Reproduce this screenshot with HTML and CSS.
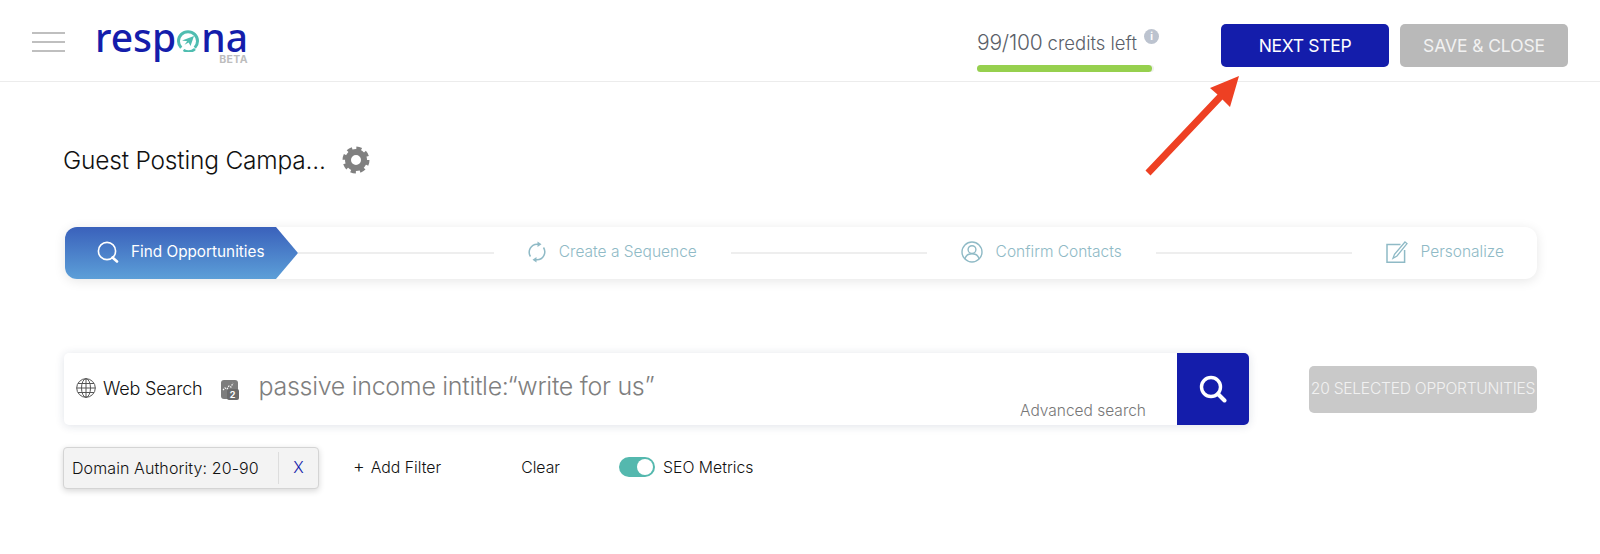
FILE: index.html
```html
<!DOCTYPE html>
<html lang="en">
<head>
<meta charset="utf-8">
<title>Respona</title>
<link rel="stylesheet" href="styles.css">
</head>
<body>
<header class="topbar">
  <div class="burger"><span></span><span></span><span></span></div>
  <div class="logo">
    <div class="logo-word"><span>resp</span><svg class="logo-o" viewBox="0 0 22 22"><path d="M4.200 17.800A9.500 9.500 0 1 1 17.800 17.800" fill="none" stroke="#4fbdb0" stroke-width="3"/><path d="M18 19A10 10 0 0 1 6.500 20" fill="none" stroke="#4fbdb0" stroke-width="2.600"/><path d="M5 10.500 L17 6 L13.500 16 L11.700 12.400 L7.500 14.800 L10.200 11.200Z" fill="#4fbdb0"/></svg><span>na</span></div>
    <div class="logo-beta">BETA</div>
  </div>
  <div class="credits">
    <div class="credits-text"><span class="credits-num">99/100</span> <span class="credits-label">credits left</span><span class="info">i</span></div>
    <div class="progress"><div class="progress-fill"></div></div>
  </div>
  <button class="btn btn-primary">NEXT STEP</button>
  <button class="btn btn-muted">SAVE &amp; CLOSE</button>
</header>

<svg class="callout" viewBox="0 0 120 120"><path d="M.5 98.600 L72.500 22.600 L65 16 L94 4 L85 35 L77.500 27.400 L5.500 103.400Z" fill="#ee4023"/></svg>

<main class="page">
  <div class="title-row">
    <h1 class="title">Guest Posting Campa...</h1>
    <svg class="gear" viewBox="0 0 28 28"><circle cx="14" cy="14" r="8" fill="none" stroke="#808080" stroke-width="6"/><circle cx="14" cy="14" r="11.500" fill="none" stroke="#808080" stroke-width="4" stroke-dasharray="5.030 4"/></svg>
  </div>

  <nav class="stepper">
    <div class="step-active">
      <svg class="step-icon" viewBox="0 0 22 22"><circle cx="10" cy="10" r="8.600" fill="none" stroke="#fff" stroke-width="1.600"/><path d="M15.500 16.500 L20 20.500" stroke="#fff" stroke-width="2.600" stroke-linecap="round"/></svg>
      <span>Find Opportunities</span>
    </div>
    <div class="step-line"></div>
    <div class="step">
      <svg class="step-icon step-icon-narrow" viewBox="0 0 18 22"><path d="M2.500 15.500A8 8 0 0 1 9 3.200H11" fill="none" stroke="#8fbac6" stroke-width="1.500"/><path d="M9.500 .5 L13.500 3.200 L9.500 6Z" fill="#8fbac6"/><path d="M15.500 6.500A8 8 0 0 1 9 18.800H7" fill="none" stroke="#8fbac6" stroke-width="1.500"/><path d="M8.500 16 L4.500 18.800 L8.500 21.500Z" fill="#8fbac6"/></svg>
      <span>Create a Sequence</span>
    </div>
    <div class="step-line"></div>
    <div class="step">
      <svg class="step-icon" viewBox="0 0 22 22"><circle cx="11" cy="11" r="10" fill="none" stroke="#8fbac6" stroke-width="1.400"/><circle cx="11" cy="8.600" r="3.900" fill="none" stroke="#8fbac6" stroke-width="1.400"/><path d="M4 18c.6-3.800 3.500-5.300 7-5.300s6.400 1.500 7 5.300" fill="none" stroke="#8fbac6" stroke-width="1.400"/></svg>
      <span>Confirm Contacts</span>
    </div>
    <div class="step-line"></div>
    <div class="step step-last">
      <svg class="step-icon" viewBox="0 0 22 22"><path d="M14.500 3.500H1v17.800h17.600V9" fill="none" stroke="#8fbac6" stroke-width="1.500"/><path d="M19 1 L21 2.600 L11 15 L7 17.300 L8.500 13.300Z" fill="none" stroke="#8fbac6" stroke-width="1.300"/></svg>
      <span>Personalize</span>
    </div>
  </nav>

  <div class="search-row">
    <div class="search-box">
      <div class="search-field">
        <svg class="globe" viewBox="0 0 20 20"><g fill="none" stroke="#555" stroke-width="1"><circle cx="10" cy="10" r="9.300"/><ellipse cx="10" cy="10" rx="4.500" ry="9.300"/><path d="M10 .7V19.300M.7 10H19.300M2 5.500H18M2 14.500H18"/></g></svg>
        <span class="search-type">Web Search</span>
        <span class="level-icon"><svg class="level-bars" viewBox="0 0 13 13"><path d="M1 9l2-2 2 1 2-3 2 1 2-4" fill="none" stroke="#fff" stroke-width="1.200" stroke-dasharray="1.500 1"/></svg><span class="level-num">2</span></span>
        <span class="query">passive income intitle:“write for us”</span>
        <span class="advanced">Advanced search</span>
      </div>
      <button class="search-btn"><svg class="search-glyph" viewBox="0 0 28 28"><circle cx="12" cy="12" r="9.500" fill="none" stroke="#fff" stroke-width="3.400"/><path d="M19 19 L25.500 25.500" stroke="#fff" stroke-width="4" stroke-linecap="round"/></svg></button>
    </div>
    <button class="selected-btn">20 SELECTED OPPORTUNITIES</button>
  </div>

  <div class="filters">
    <div class="chip"><span class="chip-label">Domain Authority: 20-90</span><span class="chip-x">X</span></div>
    <span class="add-filter"><span class="plus">+</span>Add Filter</span>
    <span class="clear">Clear</span>
    <span class="toggle"><span class="knob"></span></span>
    <span class="seo">SEO Metrics</span>
  </div>
</main>
</body>
</html>
```

FILE: styles.css
```css
* { box-sizing: border-box; }
html, body { margin: 0; padding: 0; }
body {
  position: relative;
  height: 554px;
  overflow: hidden;
  background: #fff;
  color: #111;
  font-family: Inter, "Liberation Sans", sans-serif;
}
button { font-family: inherit; border: 0; padding: 0; }

.topbar {
  display: flex;
  align-items: flex-start;
  height: 82px;
  border-bottom: 1px solid #ececec;
  padding: 24px 32px 0 32px;
}
.burger {
  display: flex;
  flex-direction: column;
  gap: 7px;
  width: 34px;
  margin-top: 8px;
}
.burger span { display: block; height: 2px; background: #bfbfbf; }

.logo {
  display: flex;
  flex-direction: column;
  align-items: flex-end;
  width: 150px;
  margin-left: 33px;
  height: 40px;
}
.logo-word {
  display: flex;
  align-items: flex-start;
  font-size: 39px;
  font-weight: 500;
  line-height: 30px;
  height: 30px;
  margin-top: -2px;
  color: #141dab;
  font-family: "Noto Sans", sans-serif;
  letter-spacing: 0;
}
.logo-o { width: 22px; height: 22px; margin: 8px 2px 0 1px; flex: none; }
.logo-beta {
  font-size: 10.500px;
  font-weight: 700;
  color: #bdbdbd;
  line-height: 10px;
  margin-top: 3px;
  letter-spacing: .4px;
}

.credits { width: 177px; margin-left: 729px; }
.credits-text {
  display: flex;
  align-items: baseline;
  color: #5b5f69;
  height: 41px;
  padding-top: 6px;
  white-space: nowrap;
}
.credits-num { font-size: 21px; font-weight: 300; letter-spacing: -.2px; }
.credits-label { font-size: 18.500px; font-weight: 300; margin-left: 5px; }
.info {
  flex: none;
  width: 15px;
  height: 15px;
  border-radius: 50%;
  background: #bcc3cf;
  color: #fff;
  font-size: 10px;
  font-weight: 700;
  line-height: 15px;
  text-align: center;
  margin-left: 7px;
  align-self: flex-start;
  margin-top: -1px;
}
.progress { height: 7px; background: #eef0ec; border-radius: 4px; }
.progress-fill { width: 99%; height: 7px; background: #96d04e; border-radius: 4px; }

.btn {
  height: 43px;
  width: 168px;
  border-radius: 5px;
  color: #fff;
  font-size: 17.500px;
  font-weight: 400;
  flex: none;
}
.btn-primary { background: #141dab; margin-left: 67px; letter-spacing: -.3px; }
.btn-muted { background: #b9b9b9; margin-left: 11px; color: #f2f2f2; letter-spacing: -.1px; }

.callout {
  position: absolute;
  left: 1145px;
  top: 72px;
  width: 120px;
  height: 120px;
}

.page { padding: 0 63px 0 64px; }
.title-row { display: flex; align-items: center; height: 30px; margin-top: 63px; }
.title { margin: 0 0 0 -1px; font-size: 24.500px; font-weight: 300; letter-spacing: -.2px; color: #111; }
.gear { width: 28px; height: 28px; margin-left: 16px; }

.stepper {
  display: flex;
  align-items: center;
  height: 52px;
  margin: 52px 0 0 1px;
  border-radius: 12px;
  background: #fff;
  padding-right: 33px;
  box-shadow: 0 2px 12px rgba(0, 0, 0, .10);
  color: #8fbac6;
  font-size: 15.500px;
  font-weight: 300;
}
.step-active {
  display: flex;
  align-items: center;
  gap: 12px;
  width: 233px;
  height: 52px;
  padding: 0 0 3px 32px;
  color: #fff;
  font-size: 15.300px;
  font-weight: 400;
  background: linear-gradient(#3a61bb, #5c9fd8);
  border-radius: 12px 0 0 12px;
  clip-path: polygon(0 0, 211px 0, 100% 50%, 211px 100%, 0 100%);
  flex: none;
  white-space: nowrap;
}
.step-line { flex: 1; height: 2px; background: #eeeeee; }
.step {
  display: flex;
  align-items: center;
  gap: 13px;
  margin: 0 34px;
  padding-bottom: 3px;
  flex: none;
  white-space: nowrap;
}
.step-last { margin-right: 0; }
.step-icon { width: 22px; height: 22px; flex: none; }
.step-icon-narrow { width: 18px; }

.search-row {
  display: flex;
  align-items: center;
  justify-content: space-between;
  margin-top: 74px;
  height: 72px;
}
.search-box {
  display: flex;
  width: 1185px;
  height: 72px;
  border-radius: 5px;
  background: #fff;
  box-shadow: 0 1px 10px rgba(30, 50, 90, .14);
}
.search-field {
  position: relative;
  flex: 1;
  display: flex;
  align-items: center;
  padding: 0 0 4px 12px;
}
.globe { width: 20px; height: 20px; flex: none; margin-top: 2px; }
.search-type { font-size: 18px; font-weight: 300; margin: 3px 0 0 7px; letter-spacing: -.2px; white-space: nowrap; }
.level-icon {
  position: relative;
  width: 17px;
  height: 19px;
  margin: 4px 0 0 18px;
  background: #7d7d7d;
  border-radius: 3px;
  flex: none;
}
.level-bars { display: block; width: 13px; height: 13px; margin: 1px 0 0 1px; }
.level-num {
  position: absolute;
  right: -1px;
  bottom: -1px;
  width: 12px;
  height: 11px;
  background: #6b6b6b;
  border-radius: 2px;
  color: #fff;
  font-size: 9px;
  font-weight: 700;
  line-height: 11px;
  text-align: center;
}
.query { font-size: 25px; font-weight: 300; color: #7f7f7f; margin: -2px 0 0 21px; white-space: nowrap; letter-spacing: -.3px; }
.advanced {
  position: absolute;
  right: 31px;
  bottom: 5px;
  font-size: 15.500px;
  font-weight: 300;
  color: #777;
  white-space: nowrap;
}
.search-btn {
  width: 72px;
  height: 72px;
  background: #141dab;
  border-radius: 0 5px 5px 0;
  display: flex;
  align-items: center;
  justify-content: center;
  flex: none;
}
.search-glyph { width: 28px; height: 28px; }
.selected-btn {
  width: 228px;
  height: 47px;
  padding-bottom: 3px;
  background: #c9c9c9;
  border-radius: 5px;
  color: #f1f1f1;
  font-size: 15.600px;
  font-weight: 300;
  white-space: nowrap;
  letter-spacing: -.25px;
  margin-top: 1px;
}

.filters {
  display: flex;
  align-items: center;
  margin-top: 22px;
  height: 42px;
  font-size: 15.800px;
  font-weight: 300;
}
.chip {
  display: flex;
  align-items: stretch;
  width: 256px;
  height: 42px;
  margin-left: -1px;
  padding: 4px 0;
  background: #f3f3f3;
  border: 1px solid #d4d4d4;
  border-radius: 4px;
  box-shadow: 0 2px 6px rgba(0, 0, 0, .16);
}
.chip-label {
  width: 215px;
  padding-left: 8px;
  font-size: 16px;
  line-height: 32px;
  border-right: 1px solid #ddd;
  white-space: nowrap;
  letter-spacing: .1px;
}
.chip-x { flex: 1; text-align: center; color: #141dab; line-height: 32px; }
.add-filter { margin-left: 34px; white-space: nowrap; margin-top: -4px; }
.plus { margin-right: 6px; font-size: 18px; }
.clear { margin-left: 80px; margin-top: -2px; }
.toggle {
  display: flex;
  justify-content: flex-end;
  align-items: center;
  width: 36px;
  height: 20px;
  margin: -2px 0 0 59px;
  padding-right: 2px;
  background: #54b8ae;
  border-radius: 10px;
}
.knob { width: 16px; height: 16px; border-radius: 50%; background: #fff; }
.seo { margin: -2px 0 0 8px; white-space: nowrap; }
```
